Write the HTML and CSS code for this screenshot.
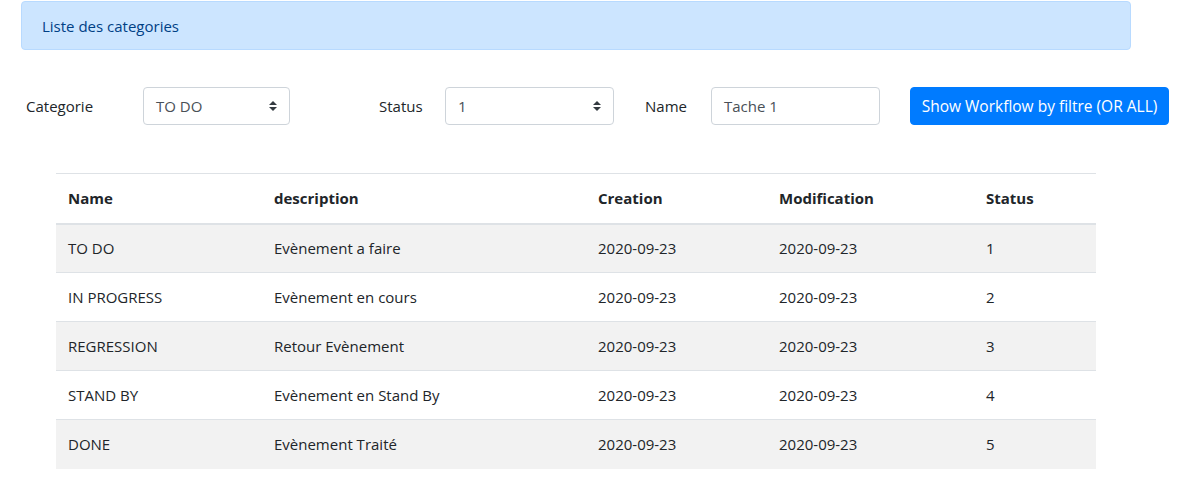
FILE: index.html
```html
<!DOCTYPE html>
<html lang="fr">
<head>
<meta charset="utf-8">
<title>Liste des categories</title>
<link rel="stylesheet" href="styles.css">
</head>
<body>
<div class="alert">Liste des categories</div>
<div class="filters">
  <label class="lbl lbl-cat">Categorie</label>
  <div class="select sel-cat"><span>TO DO</span><svg class="caret" viewBox="0 0 8 10" width="8" height="10"><path d="M4 0 L8 4 H0 Z M4 10 L0 6 H8 Z" fill="#343a40"/></svg></div>
  <label class="lbl lbl-status">Status</label>
  <div class="select sel-status"><span>1</span><svg class="caret" viewBox="0 0 8 10" width="8" height="10"><path d="M4 0 L8 4 H0 Z M4 10 L0 6 H8 Z" fill="#343a40"/></svg></div>
  <label class="lbl lbl-name">Name</label>
  <div class="input">Tache 1</div>
  <button class="btn">Show Workflow by filtre (OR ALL)</button>
</div>
<table class="table">
  <thead>
    <tr><th class="c1">Name</th><th class="c2">description</th><th class="c3">Creation</th><th class="c4">Modification</th><th class="c5">Status</th></tr>
  </thead>
  <tbody>
    <tr><td>TO DO</td><td>Evènement a faire</td><td>2020-09-23</td><td>2020-09-23</td><td>1</td></tr>
    <tr><td>IN PROGRESS</td><td>Evènement en cours</td><td>2020-09-23</td><td>2020-09-23</td><td>2</td></tr>
    <tr><td>REGRESSION</td><td>Retour Evènement</td><td>2020-09-23</td><td>2020-09-23</td><td>3</td></tr>
    <tr><td>STAND BY</td><td>Evènement en Stand By</td><td>2020-09-23</td><td>2020-09-23</td><td>4</td></tr>
    <tr><td>DONE</td><td>Evènement Traité</td><td>2020-09-23</td><td>2020-09-23</td><td>5</td></tr>
  </tbody>
</table>
</body>
</html>
```
FILE: styles.css
```css
* { box-sizing: border-box; }
body {
  margin: 0;
  padding-top: 1px;
  font-family: "Open Sans", "Noto Sans", sans-serif;
  font-size: 15px;
  color: #212529;
  background: #fff;
}
.alert {
  margin: 0 46px 0 21px;
  height: 49px;
  padding: 0 20px;
  display: flex;
  align-items: center;
  background: #cce5ff;
  border: 1px solid #b8daff;
  border-radius: 4px;
  color: #004085;
}
.filters {
  display: flex;
  align-items: center;
  margin-top: 37px;
  padding-left: 26px;
  height: 38px;
}
.lbl { display: block; color: #212529; }
.lbl-cat { width: 117px; }
.lbl-status { width: 66px; margin-left: 89px; }
.lbl-name { width: 66px; margin-left: 31px; }
.select, .input {
  height: 38px;
  border: 1px solid #ced4da;
  border-radius: 4px;
  padding: 0 12px;
  display: flex;
  align-items: center;
  justify-content: space-between;
  color: #495057;
}
.sel-cat { width: 147px; }
.sel-status { width: 169px; }
.input { width: 169px; }
.caret { display: block; }
.btn {
  margin-left: 30px;
  height: 38px;
  width: 259px;
  padding: 0;
  border: 1px solid #007bff;
  background: #007bff;
  color: #fff;
  border-radius: 4px;
  font: inherit;
  font-size: 15.5px;
  white-space: nowrap;
}
.table {
  margin: 48px 0 0 56px;
  width: 1040px;
  border-collapse: collapse;
}
.table th, .table td {
  text-align: left;
  padding: 0 12px;
  height: 49px;
  border-top: 1px solid #dee2e6;
  vertical-align: middle;
}
.table th { font-weight: 700; border-bottom: 2px solid #dee2e6; height: 50px; }
.table tbody tr:first-child td { border-top: 0; }
.table tbody tr:nth-child(odd) { background: #f2f2f2; }
.c1 { width: 206px; }
.c2 { width: 324px; }
.c3 { width: 181px; }
.c4 { width: 207px; }
.c5 { width: 122px; }
```
